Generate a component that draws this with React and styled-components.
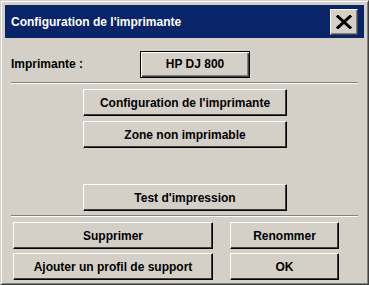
import React from 'react'
import styled, { createGlobalStyle } from 'styled-components'

const GlobalStyle = createGlobalStyle`
  html, body {
    margin: 0;
    padding: 0;
    background: #d4d0c8;
  }
  * {
    box-sizing: border-box;
  }
`

const App = () => {
  return (
    <>
      <GlobalStyle />
      <Window>
        <TitleBar>
          <Title>Configuration de l'imprimante</Title>
          <CloseButton aria-label="Fermer">
            <svg width="16" height="14" viewBox="0 0 16 14">
              <path d="M2 1.5 L14 12.5 M14 1.5 L2 12.5" stroke="#000" strokeWidth="3" strokeLinecap="square" />
            </svg>
          </CloseButton>
        </TitleBar>

        <Body>
          <PrinterRow>
            <Label>Imprimante :</Label>
            <Button $default $width={110}>HP DJ 800</Button>
          </PrinterRow>

          <Separator />

          <CenterStack>
            <Button $width={204}>Configuration de l'imprimante</Button>
            <Button $width={204}>Zone non imprimable</Button>
            <Spacer />
            <Button $width={204}>Test d'impression</Button>
          </CenterStack>

          <Separator />

          <ButtonGrid>
            <Button>Supprimer</Button>
            <Button>Renommer</Button>
            <Button>Ajouter un profil de support</Button>
            <Button>OK</Button>
          </ButtonGrid>
        </Body>
      </Window>
    </>
  )
}

const Window = styled.div`
  width: 369px;
  height: 285px;
  background: #d4d0c8;
  border-top: 1px solid #d4d0c8;
  border-left: 1px solid #d4d0c8;
  border-right: 1px solid #404040;
  border-bottom: 1px solid #404040;
  box-shadow: inset 1px 1px #ffffff, inset -1px -1px #808080;
  padding: 4px;
  display: flex;
  flex-direction: column;
  font-family: "Liberation Sans", Arial, sans-serif;
  font-weight: bold;
  font-size: 12px;
  color: #000;
`

const TitleBar = styled.div`
  height: 34px;
  background: #0a246a;
  display: flex;
  align-items: center;
  justify-content: space-between;
  padding: 0 6px 0 6px;
`

const Title = styled.span`
  color: #ffffff;
  font-size: 12px;
  font-weight: bold;
`

const CloseButton = styled.button`
  width: 28px;
  height: 26px;
  padding: 0;
  display: flex;
  align-items: center;
  justify-content: center;
  background: #d4d0c8;
  border-top: 1px solid #ffffff;
  border-left: 1px solid #ffffff;
  border-right: 1px solid #404040;
  border-bottom: 1px solid #404040;
  box-shadow: inset -1px -1px #808080;
`

const Body = styled.div`
  flex: 1;
  display: flex;
  flex-direction: column;
  padding: 12px 6px 0 6px;
`

const PrinterRow = styled.div`
  display: flex;
  align-items: center;
  height: 28px;
`

const Label = styled.span`
  width: 129px;
  padding-bottom: 1px;
`

const Separator = styled.div`
  height: 2px;
  margin: 4px 0 5px 0;
  border-top: 1px solid #808080;
  border-bottom: 1px solid #ffffff;
`

const CenterStack = styled.div`
  display: flex;
  flex-direction: column;
  align-items: center;
  gap: 5px;
  padding-left: 1px;
`

const Spacer = styled.div`
  height: 26px;
`

const ButtonGrid = styled.div`
  display: grid;
  grid-template-columns: 200px 109px;
  column-gap: 17px;
  row-gap: 4px;
  padding-left: 2px;
`

const Button = styled.button`
  width: ${p => (p.$width ? `${p.$width}px` : 'auto')};
  height: 27px;
  padding: 0;
  background: #d4d0c8;
  font-family: "Liberation Sans", Arial, sans-serif;
  font-weight: bold;
  font-size: 12px;
  color: #000;
  border-top: 1px solid ${p => (p.$default ? '#000' : '#ffffff')};
  border-left: 1px solid ${p => (p.$default ? '#000' : '#ffffff')};
  border-right: 1px solid #000;
  border-bottom: 1px solid #000;
  box-shadow: ${p =>
    p.$default
      ? 'inset 1px 1px #ffffff, inset -1px -1px #404040, inset -2px -2px #808080'
      : 'inset -1px -1px #404040'};
`

export default App
